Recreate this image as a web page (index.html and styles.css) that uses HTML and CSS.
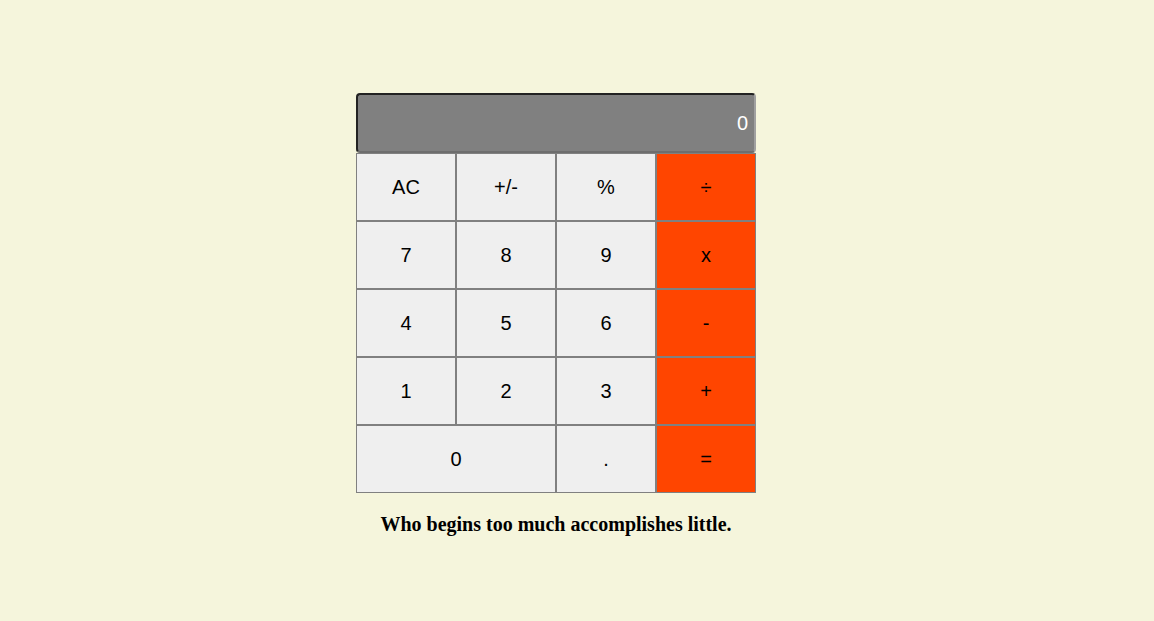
FILE: index.html
```html
<!DOCTYPE html>
<html>
<head>
<meta charset="utf-8">
<link rel="stylesheet" href="styles.css">
</head>
<body>
<div class="calc">
  <div class="display">0</div>
  <div class="keys">
    <button class="key">AC</button>
    <button class="key">+/-</button>
    <button class="key">%</button>
    <button class="key op">÷</button>
    <button class="key">7</button>
    <button class="key">8</button>
    <button class="key">9</button>
    <button class="key op">x</button>
    <button class="key">4</button>
    <button class="key">5</button>
    <button class="key">6</button>
    <button class="key op">-</button>
    <button class="key">1</button>
    <button class="key">2</button>
    <button class="key">3</button>
    <button class="key op">+</button>
    <button class="key zero">0</button>
    <button class="key">.</button>
    <button class="key op">=</button>
  </div>
  <p class="quote">Who begins too much accomplishes little.</p>
</div>
</body>
</html>
```
FILE: styles.css
```css
html, body {
  margin: 0;
  padding: 0;
  background: #f5f5dc;
}
body {
  font-family: "Liberation Serif", "Times New Roman", serif;
  padding-right: 42px;
}
.calc {
  width: 400px;
  margin: 93px auto 0;
}
.display {
  box-sizing: border-box;
  height: 60px;
  background: #808080;
  border: 2px solid #767676;
  border-top-color: #222;
  border-left-color: #222;
  border-right-color: #a0a0a0;
  border-bottom-color: #6e6e6e;
  border-radius: 4px;
  color: #fff;
  font-family: "Liberation Sans", Arial, sans-serif;
  font-size: 20px;
  display: flex;
  align-items: center;
  justify-content: flex-end;
  padding: 0 6px;
}
.keys {
  display: grid;
  grid-template-columns: repeat(4, 100px);
  grid-auto-rows: 68px;
}
.key {
  box-sizing: border-box;
  margin: 0;
  padding: 0;
  border: 1px solid #808080;
  background: #efefef;
  color: #000;
  font-family: "Liberation Sans", Arial, sans-serif;
  font-size: 20px;
}
.key.op {
  background: #ff4500;
}
.key.zero {
  grid-column: span 2;
}
.quote {
  text-align: center;
  font-size: 20px;
  font-weight: bold;
  margin: 20px 0;
}
```
